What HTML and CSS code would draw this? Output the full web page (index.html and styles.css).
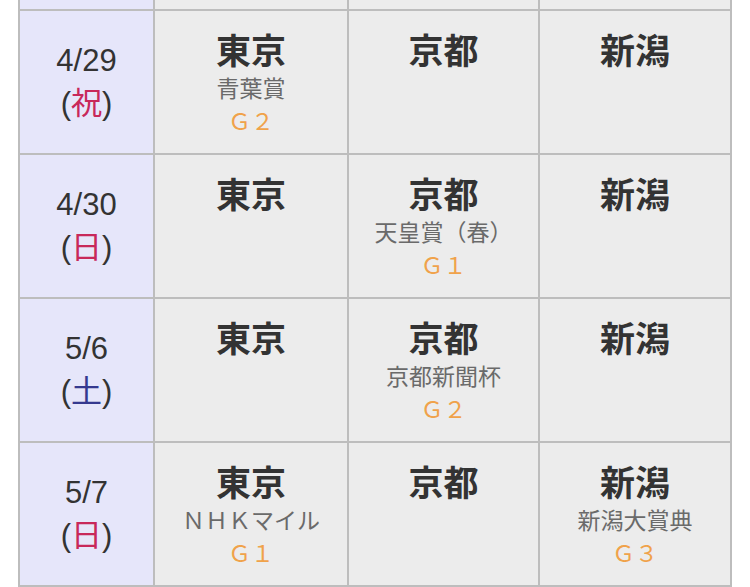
FILE: index.html
```html
<!DOCTYPE html>
<html lang="ja">
<head>
<meta charset="utf-8">
<title>重賞日程</title>
<link rel="stylesheet" href="styles.css">
</head>
<body>
<div class="schedule">
  <div class="cell date cut"></div>
  <div class="cell venue cut"></div>
  <div class="cell venue cut"></div>
  <div class="cell venue cut"></div>

  <div class="cell date"><span class="md">4/29</span><span class="dow">(<span class="holiday">祝</span>)</span></div>
  <div class="cell venue"><span class="name">東京</span><span class="race">青葉賞</span><span class="grade">Ｇ２</span></div>
  <div class="cell venue"><span class="name">京都</span></div>
  <div class="cell venue"><span class="name">新潟</span></div>

  <div class="cell date"><span class="md">4/30</span><span class="dow">(<span class="holiday">日</span>)</span></div>
  <div class="cell venue"><span class="name">東京</span></div>
  <div class="cell venue"><span class="name">京都</span><span class="race">天皇賞（春）</span><span class="grade">Ｇ１</span></div>
  <div class="cell venue"><span class="name">新潟</span></div>

  <div class="cell date"><span class="md">5/6</span><span class="dow">(<span class="sat">土</span>)</span></div>
  <div class="cell venue"><span class="name">東京</span></div>
  <div class="cell venue"><span class="name">京都</span><span class="race">京都新聞杯</span><span class="grade">Ｇ２</span></div>
  <div class="cell venue"><span class="name">新潟</span></div>

  <div class="cell date"><span class="md">5/7</span><span class="dow">(<span class="holiday">日</span>)</span></div>
  <div class="cell venue"><span class="name">東京</span><span class="race">ＮＨＫマイル</span><span class="grade">Ｇ１</span></div>
  <div class="cell venue"><span class="name">京都</span></div>
  <div class="cell venue"><span class="name">新潟</span><span class="race">新潟大賞典</span><span class="grade">Ｇ３</span></div>
</div>
</body>
</html>
```

FILE: styles.css
```css
html, body {
  margin: 0;
  padding: 0;
  background: #ffffff;
}

body {
  font-family: "Liberation Sans", "Noto Sans CJK JP", sans-serif;
  color: #333333;
}

.schedule {
  margin-left: 18px;
  width: 714px;
  box-sizing: border-box;
  padding: 0 2px 2px 2px;
  background: #bdbdbd;
  display: grid;
  grid-template-columns: 133px 192px 189px 190px;
  grid-template-rows: 9px repeat(4, 142px);
  gap: 2px;
}

.cell {
  display: flex;
  flex-direction: column;
  align-items: center;
  overflow: hidden;
}

.date {
  background: #e6e6fa;
  justify-content: center;
  font-size: 31px;
  line-height: 40px;
  color: #333333;
}

.venue {
  background: #ececec;
  justify-content: flex-start;
  padding-top: 16px;
  box-sizing: border-box;
}

.cut {
  padding-top: 0;
}

.holiday {
  color: #c8285a;
  font-family: "Noto Sans CJK JP", sans-serif;
}

.sat {
  color: #35398f;
  font-family: "Noto Sans CJK JP", sans-serif;
}

.name {
  font-family: "Noto Sans CJK JP", sans-serif;
  font-weight: 700;
  font-size: 35px;
  line-height: 44px;
  color: #333333;
}

.race {
  font-family: "Noto Sans CJK JP", sans-serif;
  font-size: 23px;
  line-height: 33px;
  color: #6a6a6a;
}

.grade {
  font-family: "Noto Sans CJK JP", sans-serif;
  font-size: 23px;
  line-height: 33px;
  color: #f0a24a;
}
```
